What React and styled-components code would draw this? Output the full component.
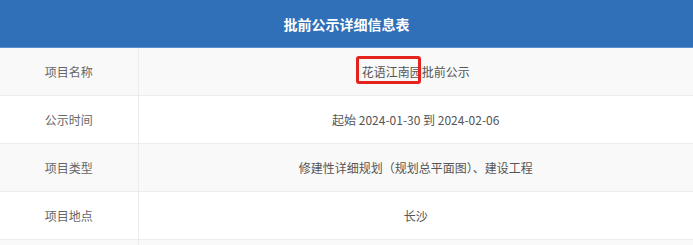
import styled, { createGlobalStyle } from "styled-components";

const GlobalStyle = createGlobalStyle`
  body {
    margin: 0;
    background: #fff;
    font-family: "Noto Sans CJK SC", "Noto Sans", "Liberation Sans", sans-serif;
  }
`;

const Table = styled.table`
  width: 693px;
  border-collapse: collapse;
  table-layout: fixed;
`;

const LabelCol = styled.col`
  width: 138px;
`;

const Caption = styled.th`
  height: 47px;
  padding: 0;
  background: #3070b9;
  color: #fff;
  font-size: 14px;
  font-weight: bold;
  text-align: center;
  border-bottom: 1px solid #5a8fd0;
`;

const Row = styled.tr`
  background: ${(p) => (p.$striped ? "#f9f9f9" : "#fff")};
`;

const Label = styled.td`
  height: 47px;
  padding: 0;
  text-align: center;
  font-size: 12px;
  color: #666;
  border-bottom: 1px solid #ececec;
  border-right: 1px solid #ececec;
`;

const Value = styled.td`
  height: 47px;
  padding: 0;
  text-align: center;
  font-size: 12px;
  color: #555;
  border-bottom: 1px solid #ececec;
`;

const Marked = styled.span`
  position: relative;
  &::after {
    content: "";
    position: absolute;
    left: -6px;
    top: -7px;
    width: 59px;
    height: 22px;
    border: 3px solid #e3231c;
    border-radius: 3px;
  }
`;

const rows = [
  { label: "项目名称", value: null },
  { label: "公示时间", value: "起始 2024-01-30 到 2024-02-06" },
  { label: "项目类型", value: "修建性详细规划（规划总平面图）、建设工程" },
  { label: "项目地点", value: "长沙" },
  { label: "", value: "" },
];

export default function App() {
  return (
    <>
      <GlobalStyle />
      <Table>
        <colgroup>
          <LabelCol />
          <col />
        </colgroup>
        <thead>
          <tr>
            <Caption colSpan={2}>批前公示详细信息表</Caption>
          </tr>
        </thead>
        <tbody>
          {rows.map((r, i) => (
            <Row key={i} $striped={i % 2 === 0}>
              <Label>{r.label}</Label>
              <Value>
                {r.value === null ? (
                  <>
                    <Marked>花语江南园</Marked>批前公示
                  </>
                ) : (
                  r.value
                )}
              </Value>
            </Row>
          ))}
        </tbody>
      </Table>
    </>
  );
}
